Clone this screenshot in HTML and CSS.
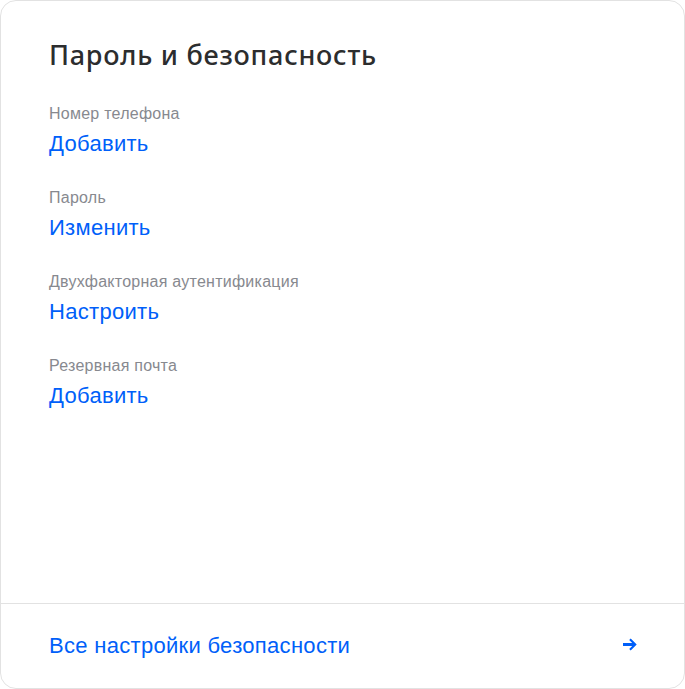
FILE: index.html
```html
<!DOCTYPE html>
<html lang='ru'>
<head>
  <meta charset='UTF-8'>
  <meta name='viewport' content='width=device-width, initial-scale=1.0'>
  <title>Пароль и безопасность</title>
  <link rel="stylesheet" href="styles.css">
</head>
<body>

<div class='security-card'>
  <div class='security-body'>
    <div class='security-header'>Пароль и безопасность</div>

    <div class='security-item'>
      <div class='item-label'>Номер телефона</div>
      <a class='item-link' href='#'>Добавить</a>
    </div>

    <div class='security-item'>
      <div class='item-label'>Пароль</div>
      <a class='item-link' href='#'>Изменить</a>
    </div>

    <div class='security-item'>
      <div class='item-label'>Двухфакторная аутентификация</div>
      <a class='item-link' href='#'>Настроить</a>
    </div>

    <div class='security-item'>
      <div class='item-label'>Резервная почта</div>
      <a class='item-link' href='#'>Добавить</a>
    </div>
  </div>

  <a class='security-footer' href='#'>
    <span>Все настройки безопасности</span>
    <svg class='footer-arrow' width='16' height='13' viewBox='0 0 16 13'>
      <path d='M1 5h9.2L7.2 2 8.7 0.5 14.7 6.5 8.7 12.5 7.2 11 10.2 8H1z' fill='#005ff9'/>
    </svg>
  </a>
</div>

</body>
</html>
```

FILE: styles.css
```css
* {
  margin: 0;
  padding: 0;
  box-sizing: border-box;
}

body {
  font-family: 'Liberation Sans', Arial, sans-serif;
  background-color: #fff;
  width: 685px;
  height: 689px;
}

.security-card {
  width: 685px;
  height: 689px;
  border: 1px solid #e2e2e2;
  border-radius: 16px;
  display: flex;
  flex-direction: column;
  overflow: hidden;
}

.security-body {
  flex: 1;
  padding: 36px 48px 0;
}

.security-header {
  font-family: 'Noto Sans', sans-serif;
  font-size: 27px;
  line-height: 36px;
  font-weight: 500;
  letter-spacing: 0.75px;
  color: #2c2d2e;
  margin-bottom: 31px;
}

.security-item {
  margin-bottom: 30px;
}

.item-label {
  font-size: 16px;
  line-height: 20px;
  letter-spacing: 0.25px;
  color: #87898f;
  margin-bottom: 6px;
}

.item-link {
  display: block;
  font-size: 22px;
  line-height: 28px;
  letter-spacing: 0.3px;
  color: #005ff9;
  text-decoration: none;
}

/* Footer */
.security-footer {
  height: 85px;
  border-top: 1px solid #e2e2e2;
  display: flex;
  align-items: center;
  justify-content: space-between;
  padding: 0 46px 0 48px;
  font-size: 22px;
  letter-spacing: 0.3px;
  color: #005ff9;
  text-decoration: none;
}

.footer-arrow {
  display: block;
  margin-top: -3px;
}
```
